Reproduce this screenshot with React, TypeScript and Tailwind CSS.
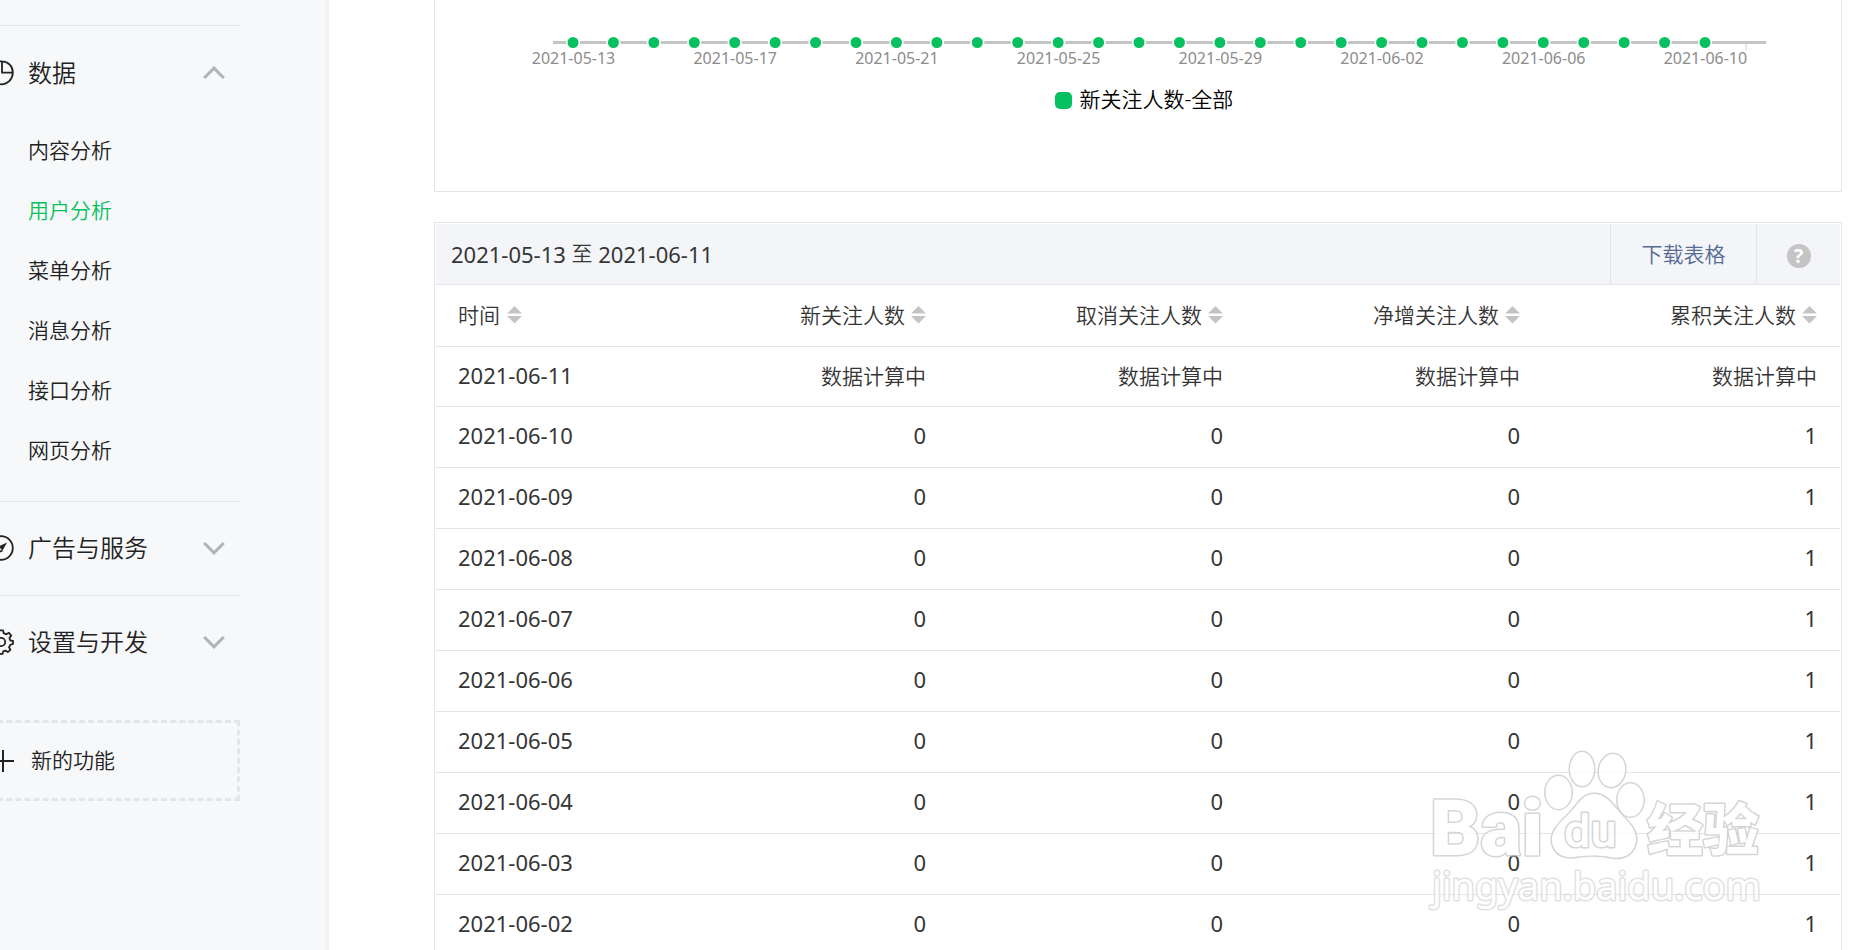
import React from "react";

const SUB_ITEMS = ["内容分析", "用户分析", "菜单分析", "消息分析", "接口分析", "网页分析"];
const ACTIVE_ITEM = "用户分析";

const AXIS_DATES = [
  "2021-05-13",
  "2021-05-17",
  "2021-05-21",
  "2021-05-25",
  "2021-05-29",
  "2021-06-02",
  "2021-06-06",
  "2021-06-10",
];

const COLUMNS = ["新关注人数", "取消关注人数", "净增关注人数", "累积关注人数"];

const PENDING = "数据计算中";

const ROWS = [
  { date: "2021-06-11", values: [PENDING, PENDING, PENDING, PENDING] },
  ...["10", "09", "08", "07", "06", "05", "04", "03", "02"].map((day) => ({
    date: `2021-06-${day}`,
    values: ["0", "0", "0", "1"],
  })),
];

function PieIcon() {
  return (
    <svg className="w-[26px] h-[26px] shrink-0" viewBox="0 0 26 26" fill="none" stroke="#222" strokeWidth="1.8">
      <path d="M14 1.3A11.5 11.5 0 1 0 24.8 12.6A11 11 0 0 0 14 1.3V12.6H25.5" />
    </svg>
  );
}

function CompassIcon() {
  return (
    <svg className="w-[26px] h-[26px] shrink-0" viewBox="0 0 26 26" fill="none" stroke="#222" strokeWidth="1.8">
      <circle cx="13" cy="13" r="11.8" />
      <path d="M19 7.5L10.5 11.5L14.5 15.5Z" fill="#222" stroke="none" />
      <path d="M10.5 11.5L7.5 18.5L14.5 15.5" />
    </svg>
  );
}

function GearIcon() {
  return (
    <svg className="w-[26px] h-[26px] shrink-0" viewBox="0 0 26 26" fill="none" stroke="#222" strokeWidth="1.8">
      <circle cx="13" cy="13" r="4.2" />
      <path
        strokeLinejoin="round"
        d="M11 1.3H15L15.7 4.2L18.3 5.3L20.9 3.8L23.2 6.6L21.4 9L22.3 11.4L25 12V15L22.2 15.8L21 18.3L22.4 20.8L19.8 23.1L17.4 21.6L15.2 22.4L14.6 24.8H11.4L10.6 22.2L8.4 21.4L6 22.9L3.2 20.2L4.6 17.8L3.6 15.4L1 14.8V11.4L3.6 10.7L4.6 8.3L3.2 5.9L5.9 3.2L8.3 4.6L10.4 3.8Z"
      />
    </svg>
  );
}

function Chevron({ up = false }: { up?: boolean }) {
  return (
    <svg className="w-[22px] h-[14px]" viewBox="0 0 22 14" fill="none" stroke="#b2b3b5" strokeWidth="3">
      <path d={up ? "M1.2 12L11 2.2L20.8 12" : "M1.2 2L11 11.8L20.8 2"} />
    </svg>
  );
}

function SortIcon() {
  return (
    <svg className="w-[15px] h-[18px]" viewBox="0 0 15 18" fill="#c4c4c4">
      <path d="M7.5 0L15 7.5H0Z" />
      <path d="M7.5 17.5L0 10H15Z" />
    </svg>
  );
}

interface GroupButtonProps {
  icon: React.ReactNode;
  label: string;
  open?: boolean;
}

function GroupButton({ icon, label, open }: GroupButtonProps) {
  return (
    <button aria-expanded={!!open} className="flex items-center w-full h-[93px] pb-px pr-[15px] text-2xl">
      {icon}
      <span className="ml-[14px] mr-auto">{label}</span>
      <Chevron up={open} />
    </button>
  );
}

function Sidebar() {
  return (
    <aside className="w-[329px] shrink-0 bg-[#f7f8fa] shadow-[inset_-5px_0_4px_-3px_#eeeff3] text-[#222] font-[350]">
      <nav className="w-[252px] -ml-3 pt-[25px]">
        <section className="border-t border-[#e4e5e8] pt-px pb-5">
          <GroupButton icon={<PieIcon />} label="数据" open />
          <ul className="pt-px">
            {SUB_ITEMS.map((item) => (
              <li key={item}>
                <a
                  href="#"
                  className={`flex items-center h-[60px] pl-10 text-[21px] ${item === ACTIVE_ITEM ? "text-[#07c160]" : ""}`}
                >
                  {item}
                </a>
              </li>
            ))}
          </ul>
        </section>
        <section className="border-t border-[#e4e5e8]">
          <GroupButton icon={<CompassIcon />} label="广告与服务" />
        </section>
        <section className="border-t border-[#e4e5e8]">
          <GroupButton icon={<GearIcon />} label="设置与开发" />
        </section>
        <button className="flex items-center w-full h-[81px] mt-[31px] border-[3px] border-dashed border-[#e4e5e7] text-[21px]">
          <svg className="w-[24px] h-[24px]" viewBox="0 0 24 24" stroke="#222" strokeWidth="2">
            <path d="M12 1V23M1 12H23" />
          </svg>
          <span className="ml-4">新的功能</span>
        </button>
      </nav>
    </aside>
  );
}

function ChartPanel() {
  return (
    <section className="h-[192px] border border-t-0 border-[#e4e5e8]">
      <svg className="block w-full h-[76px]" viewBox="435 0 1406 76">
        <path d="M553 42.5H1766" stroke="#c4c4c4" strokeWidth="3" />
        <path d="M1746 44V50" stroke="#c0d0e0" />
        {Array.from({ length: 29 }, (_, i) => (
          <circle key={i} cx={573 + i * 40.43} cy="42.5" r="6.3" fill="#07c160" stroke="#fff" strokeWidth="1.6" />
        ))}
        {AXIS_DATES.map((date, i) => (
          <text key={date} x={573.5 + i * 161.7} y="64" textAnchor="middle" fontSize="16" fill="#8c8c8c">
            {date}
          </text>
        ))}
      </svg>
      <div className="flex items-center justify-center h-12 pl-3 text-[21px] text-black font-[350]">
        <span className="w-[17px] h-[17px] mr-2 rounded-[5px] bg-[#07c160]" />
        新关注人数-全部
      </div>
    </section>
  );
}

function DetailTable() {
  return (
    <section className="mt-[30px] p-px border border-[#e4e5e8] text-[#353535]">
      <header className="flex items-stretch h-[61px] bg-[#f4f5f9] border-b border-[#e4e5e8] text-[22px]">
        <h2 className="flex items-center mr-auto pl-[15px]">
          2021-05-13&nbsp;<span className="text-[21px] font-[350]">至</span>&nbsp;2021-06-11
        </h2>
        <a
          href="#"
          className="flex items-center justify-center w-[146px] pt-[2px] border-l border-[#e4e5e8] text-[21px] text-[#576b95] font-[350]"
        >
          下载表格
        </a>
        <button aria-label="帮助" className="flex items-center justify-center w-[84px] pt-[3px] border-l border-[#e4e5e8]">
          <span className="flex items-center justify-center w-6 h-6 rounded-full bg-[#c4c4c4] text-white text-xl leading-6 font-bold">
            ?
          </span>
        </button>
      </header>
      <table className="w-full table-fixed text-[22px]">
        <thead>
          <tr className="h-[61px] border-b border-[#e4e5e8] text-[21px]">
            <th className="pl-[22px] text-left font-[350]">
              <button className="inline-flex items-center gap-[7px]">
                时间
                <SortIcon />
              </button>
            </th>
            {COLUMNS.map((column) => (
              <th key={column} className="w-[297px] pr-[23px] text-right font-[350]">
                <button className="inline-flex items-center gap-[6px]">
                  {column}
                  <SortIcon />
                </button>
              </th>
            ))}
          </tr>
        </thead>
        <tbody>
          {ROWS.map((row) => (
            <tr key={row.date} className="h-[61px] first:h-[60px] border-b border-[#e4e5e8]">
              <td className="pl-[22px] pb-[2px]">{row.date}</td>
              {row.values.map((value, i) => (
                <td
                  key={i}
                  className={`pr-[23px] text-right ${value === PENDING ? "pt-[2px] text-[21px] font-[350]" : "pb-[2px]"}`}
                >
                  {value}
                </td>
              ))}
            </tr>
          ))}
        </tbody>
      </table>
    </section>
  );
}

function Watermark() {
  return (
    <svg
      className="absolute right-[95px] bottom-[35px] w-[345px] h-[170px] pointer-events-none opacity-80"
      viewBox="1425 745 345 170"
      fill="#fff"
      stroke="#cbcbcb"
      strokeWidth="3"
      strokeLinejoin="round"
      paintOrder="stroke"
    >
      <text x="1430" y="855" fontSize="78" className="font-['Roboto',sans-serif] font-black">
        Bai
      </text>
      <ellipse cx="1558.5" cy="792.5" rx="13" ry="16.5" />
      <ellipse cx="1582" cy="769" rx="12" ry="17" />
      <ellipse cx="1612" cy="770.5" rx="13" ry="16.5" transform="rotate(10 1612 770.5)" />
      <ellipse cx="1630.5" cy="800" rx="13" ry="16.5" />
      <path d="M1594 794C1582 794 1577 806 1568 815C1558 824 1551 832 1552 842C1554 853 1562 858 1574 857C1586 855 1600 855 1610 857C1624 860 1636 853 1636 839C1636 828 1627 821 1620 813C1611 803 1606 794 1594 794Z" />
      <text x="1564" y="847" fontSize="47" className="font-['Roboto',sans-serif] font-medium">
        du
      </text>
      <text x="1647" y="850" fontSize="56" className="font-black">
        经验
      </text>
      <text x="1432" y="900" fontSize="38" stroke="#dadada">
        jingyan.baidu.com
      </text>
    </svg>
  );
}

export default function App() {
  return (
    <div className="relative flex h-screen overflow-hidden bg-white font-['Noto_Sans','Noto_Sans_CJK_SC',sans-serif]">
      <Sidebar />
      <main className="flex-1 min-w-0 pl-[105px] pr-[23px]">
        <ChartPanel />
        <DetailTable />
      </main>
      <Watermark />
    </div>
  );
}
